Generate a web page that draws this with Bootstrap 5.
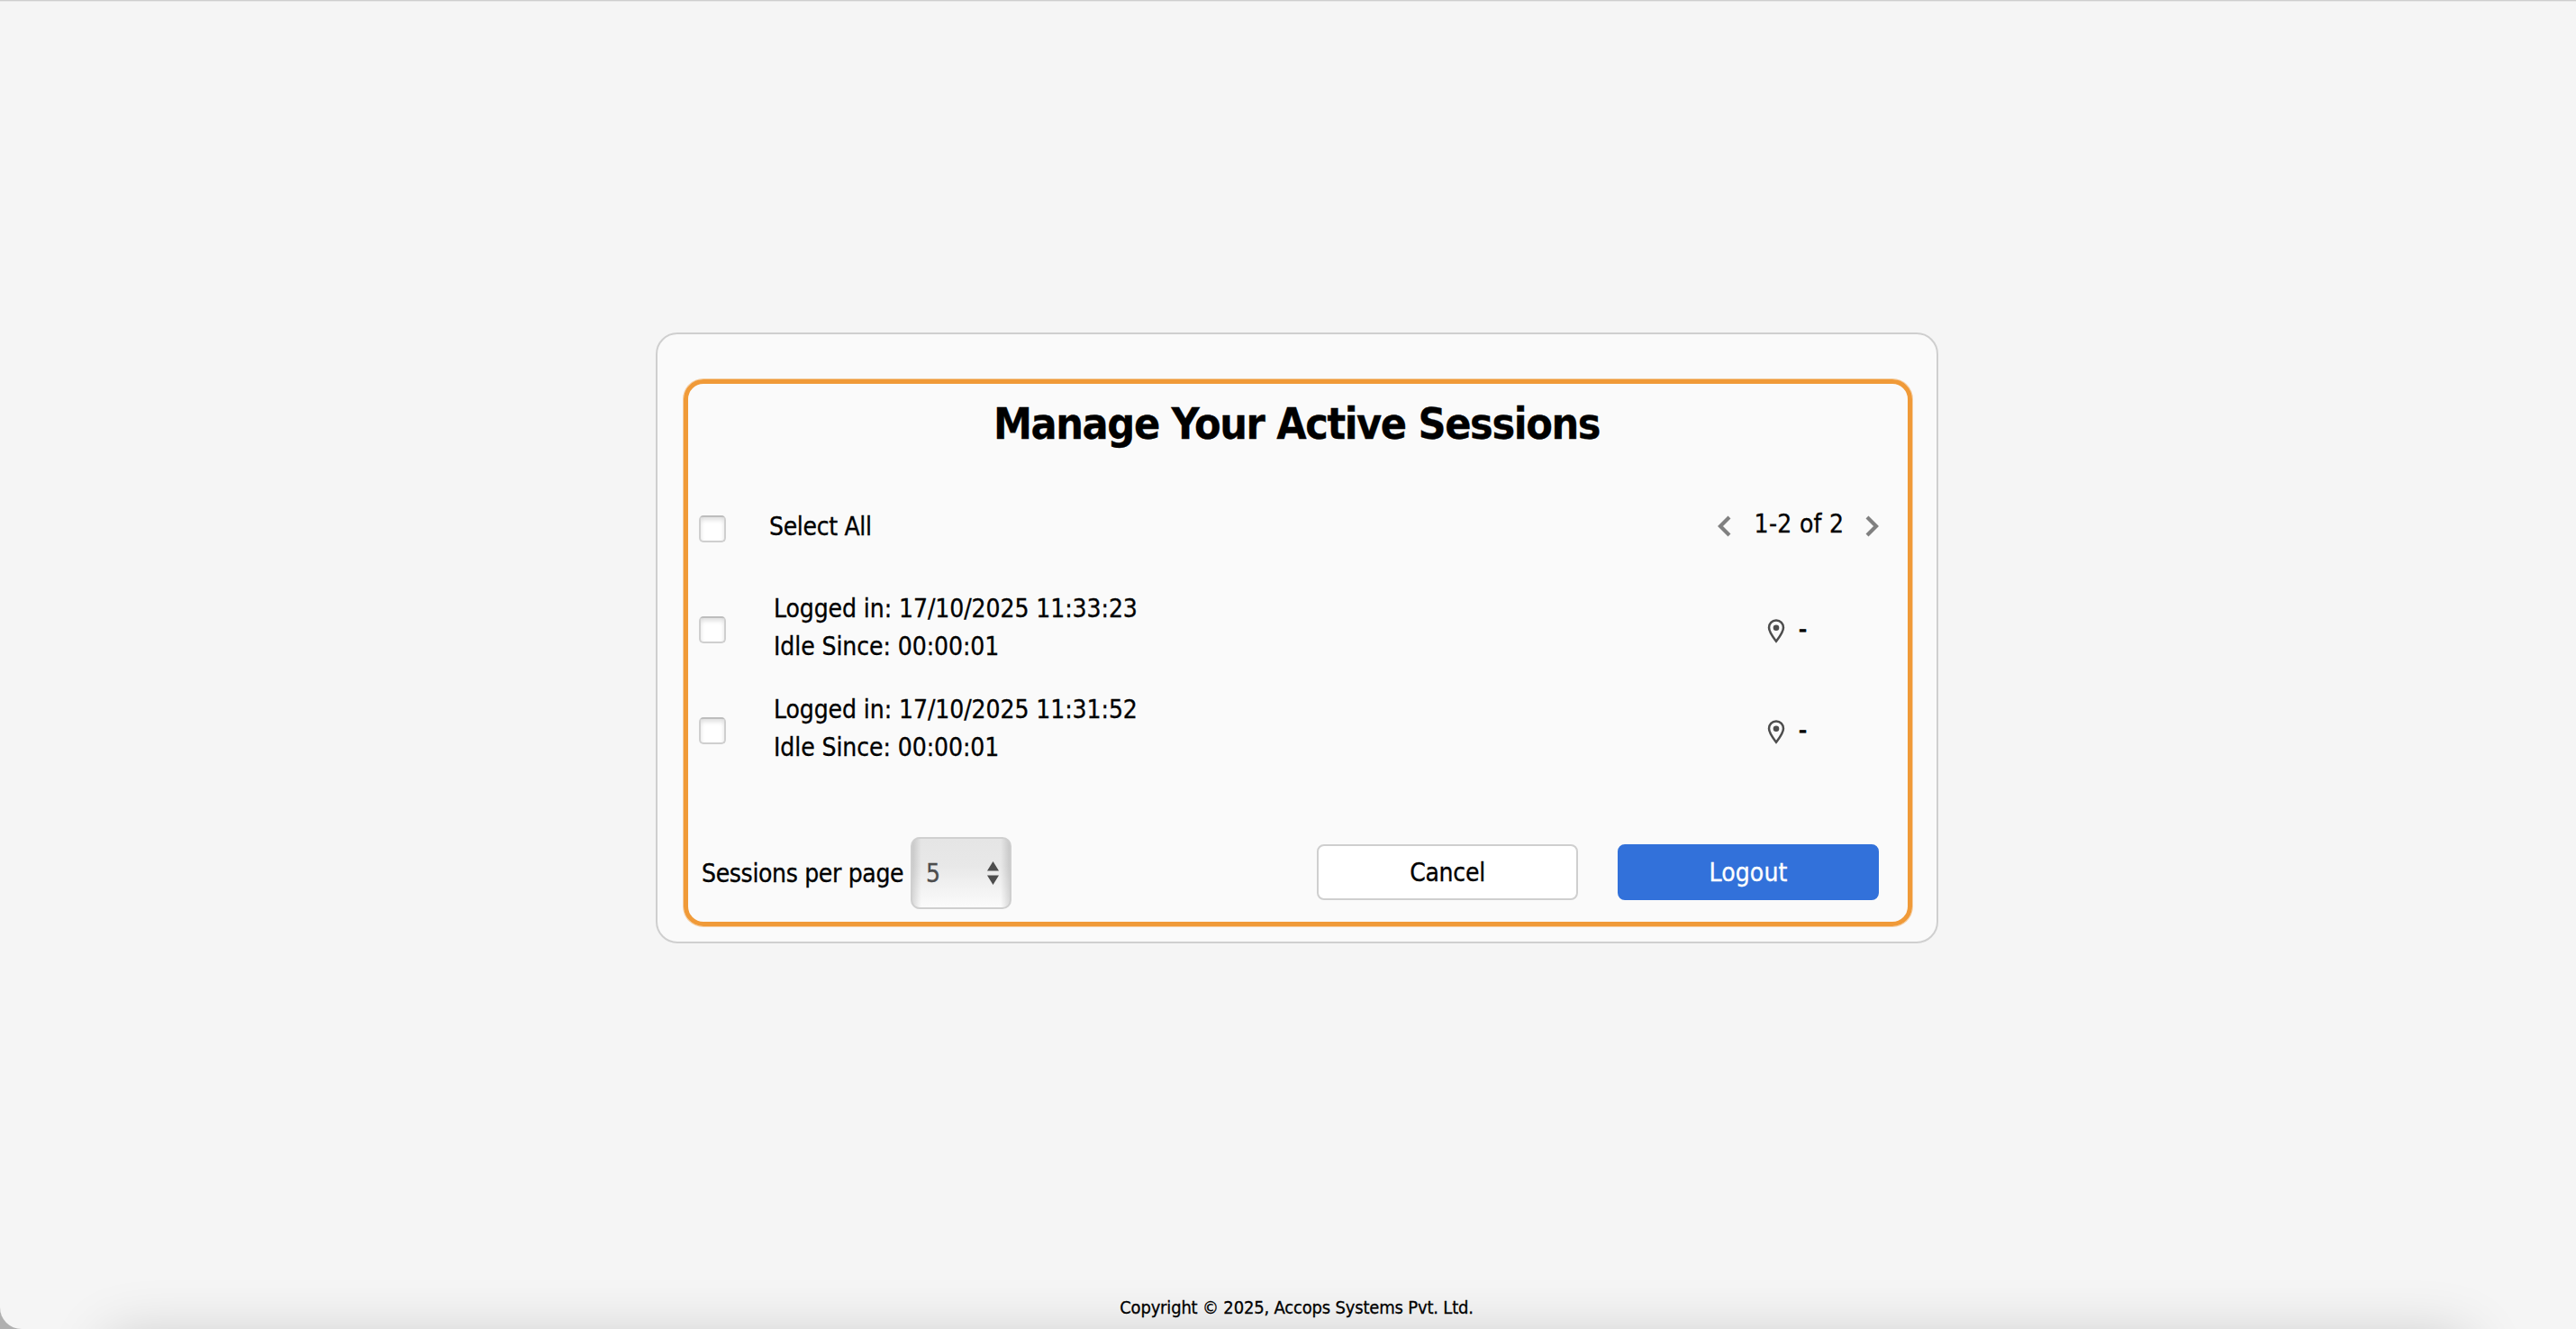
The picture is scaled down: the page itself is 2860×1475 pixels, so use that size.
<!DOCTYPE html>
<html lang="en">
<head>
  <meta charset="UTF-8" />
  <meta name="viewport" content="width=device-width, initial-scale=1.0" />
  <title>Manage Your Active Sessions</title>
  <link href="https://cdn.jsdelivr.net/npm/bootstrap@5.3.3/dist/css/bootstrap.min.css" rel="stylesheet" />
  <style>
    body {
      background-color: #b0b0b0;
      color: #000;
      font-family: "DejaVu Sans Condensed", "DejaVu Sans", sans-serif;
      font-size: 28px;
      line-height: 42px;
      -webkit-text-stroke: 0.3px;
    }
    .page {
      height: 1475px;
      background-color: #f5f5f5;
      border-top: 1px solid #cecece;
      box-shadow: inset 0 1px 0 #e8e8e8;
      border-bottom-left-radius: 24px;
    }
    /* soft shade along the bottom of the window */
    .page::after {
      content: "";
      position: absolute;
      left: 120px;
      right: 120px;
      top: 1484px;
      height: 120px;
      box-shadow: 0 0 66px rgba(0, 0, 0, 0.19);
    }
    .session-card {
      width: 1424px;
      height: 678px;
      margin: 368px 0 0 20px;
      padding: 50px 27px 17px 29px;
      background-color: #fafafa;
      border: 2px solid #cfcfcf;
      border-radius: 24px;
    }
    .session-panel {
      padding-top: 14px;
      border: 5px solid #f09a38;
      border-radius: 22px;
      box-shadow: 0 0 0 1px rgba(240, 154, 56, 0.45);
    }
    .session-title {
      font-size: 48px;
      line-height: 60px;
      letter-spacing: -1.38px;
      margin: 0 3px 64px 0;
    }
    .session-row {
      padding: 0 32px 0 12px;
    }
    .session-row + .session-row {
      margin-top: 28px;
    }
    .select-row {
      margin-bottom: 49px;
    }
    .select-row label {
      letter-spacing: -0.33px;
    }
    .check-box {
      appearance: none;
      width: 30px;
      height: 30px;
      margin: 3px 53px 0 0;
      flex: none;
      background-color: #fff;
      border: 2px solid #cfcfcf;
      border-top-color: #bdbdbd;
      border-radius: 5px;
      box-shadow: inset 0 3px 5px rgba(0, 0, 0, 0.13);
    }
    .select-row .check-box {
      margin-right: 48px;
    }
    .session-info {
      letter-spacing: -0.08px;
    }
    .pager {
      width: 179px;
      height: 40px;
    }
    .pager svg {
      margin-bottom: 3px;
    }
    .pager-text {
      position: relative;
      left: 1px;
      top: -3px;
      letter-spacing: 0.3px;
    }
    .location {
      width: 124px;
      gap: 15px;
    }
    .location svg {
      margin-top: 7px;
    }
    .location span {
      margin-top: 4px;
      -webkit-text-stroke: 0.8px;
    }
    .panel-footer {
      height: 80px;
      margin-top: 78px;
      padding: 0 32px 0 15px;
    }
    .page-label {
      width: 232px;
      padding-top: 2px;
      letter-spacing: -0.34px;
    }
    .page-size {
      appearance: none;
      width: 112px;
      height: 80px;
      padding: 2px 15px 0;
      color: #4d4d4d;
      border: 2px solid #cfcfcf;
      border-radius: 10px;
      background: linear-gradient(90deg, rgba(0, 0, 0, 0.13), transparent 10px, transparent calc(100% - 10px), rgba(0, 0, 0, 0.13)),
        linear-gradient(#e5e5e5, #e8e8e8 40%, #fbfbfb);
    }
    .page-arrows {
      right: 14px;
      top: 27px;
    }
    .action-btn {
      width: 290px;
      height: 62px;
      padding: 2px 0 0;
      margin-bottom: 2px;
      font-size: 28px;
      line-height: 42px;
      border: 2px solid #cfcfcf;
      border-radius: 8px;
      background-color: #fff;
      color: #000;
      letter-spacing: -0.27px;
    }
    .action-btn.logout {
      margin-left: 44px;
      background-color: #3271da;
      border-color: #3271da;
      color: #fff;
      letter-spacing: 0.14px;
    }
    .copyright {
      font-size: 20px;
      line-height: 24px;
      letter-spacing: -0.18px;
      margin: 0 0 12px 19px;
      z-index: 1;
    }
  </style>
</head>
<body>
  <div class="page position-relative overflow-hidden d-flex flex-column align-items-center">
    <main class="session-card">
      <div class="session-panel h-100">
        <h1 class="session-title text-center fw-bold">Manage Your Active Sessions</h1>

        <!-- Select all and pager -->
        <div class="session-row select-row d-flex align-items-center">
          <input type="checkbox" class="check-box" id="selectAll" aria-label="Select All" />
          <label for="selectAll">Select All</label>
          <div class="pager d-flex align-items-center justify-content-between ms-auto">
            <svg width="15" height="24" viewBox="0 0 15 24" fill="none" stroke="#808080" stroke-width="4.2"><path d="M13 2 3 12l10 10" /></svg>
            <span class="pager-text">1-2 of 2</span>
            <svg width="15" height="24" viewBox="0 0 15 24" fill="none" stroke="#808080" stroke-width="4.2"><path d="m2 2 10 10L2 22" /></svg>
          </div>
        </div>

        <!-- Active sessions -->
        <div class="session-row d-flex align-items-center">
          <input type="checkbox" class="check-box" aria-label="Session 1" />
          <div class="session-info">
            <div>Logged in: 17/10/2025 11:33:23</div>
            <div>Idle Since: 00:00:01</div>
          </div>
          <div class="location d-flex align-items-center ms-auto">
            <svg width="20" height="27" viewBox="0 0 20 27"><path d="M10 1.6c-4.7 0-8 3.5-8 8 0 5 4.3 10.300 8 15.200 3.700-4.900 8-10.200 8-15.200 0-4.500-3.300-8-8-8Z" fill="none" stroke="#4d4d4d" stroke-width="2.5" /><circle cx="10" cy="9.8" r="3.3" fill="#4d4d4d" /></svg>
            <span>-</span>
          </div>
        </div>
        <div class="session-row d-flex align-items-center">
          <input type="checkbox" class="check-box" aria-label="Session 2" />
          <div class="session-info">
            <div>Logged in: 17/10/2025 11:31:52</div>
            <div>Idle Since: 00:00:01</div>
          </div>
          <div class="location d-flex align-items-center ms-auto">
            <svg width="20" height="27" viewBox="0 0 20 27"><path d="M10 1.6c-4.7 0-8 3.5-8 8 0 5 4.3 10.300 8 15.200 3.700-4.900 8-10.200 8-15.200 0-4.500-3.300-8-8-8Z" fill="none" stroke="#4d4d4d" stroke-width="2.5" /><circle cx="10" cy="9.8" r="3.3" fill="#4d4d4d" /></svg>
            <span>-</span>
          </div>
        </div>

        <!-- Page size and actions -->
        <div class="panel-footer d-flex align-items-center">
          <label class="page-label" for="pageSize">Sessions per page</label>
          <div class="position-relative d-flex">
            <select class="page-size" id="pageSize">
              <option>5</option>
            </select>
            <svg class="page-arrows position-absolute pe-none" width="13" height="26" viewBox="0 0 13 26" fill="#4d4d4d"><path d="M6.5 0 13 10.5H0ZM0 15.5h13L6.5 26Z" /></svg>
          </div>
          <button type="button" class="btn action-btn ms-auto">Cancel</button>
          <button type="button" class="btn action-btn logout">Logout</button>
        </div>
      </div>
    </main>

    <footer class="copyright mt-auto">Copyright © 2025, Accops Systems Pvt. Ltd.</footer>
  </div>

  <script src="https://cdn.jsdelivr.net/npm/bootstrap@5.3.3/dist/js/bootstrap.bundle.min.js"></script>
</body>
</html>
